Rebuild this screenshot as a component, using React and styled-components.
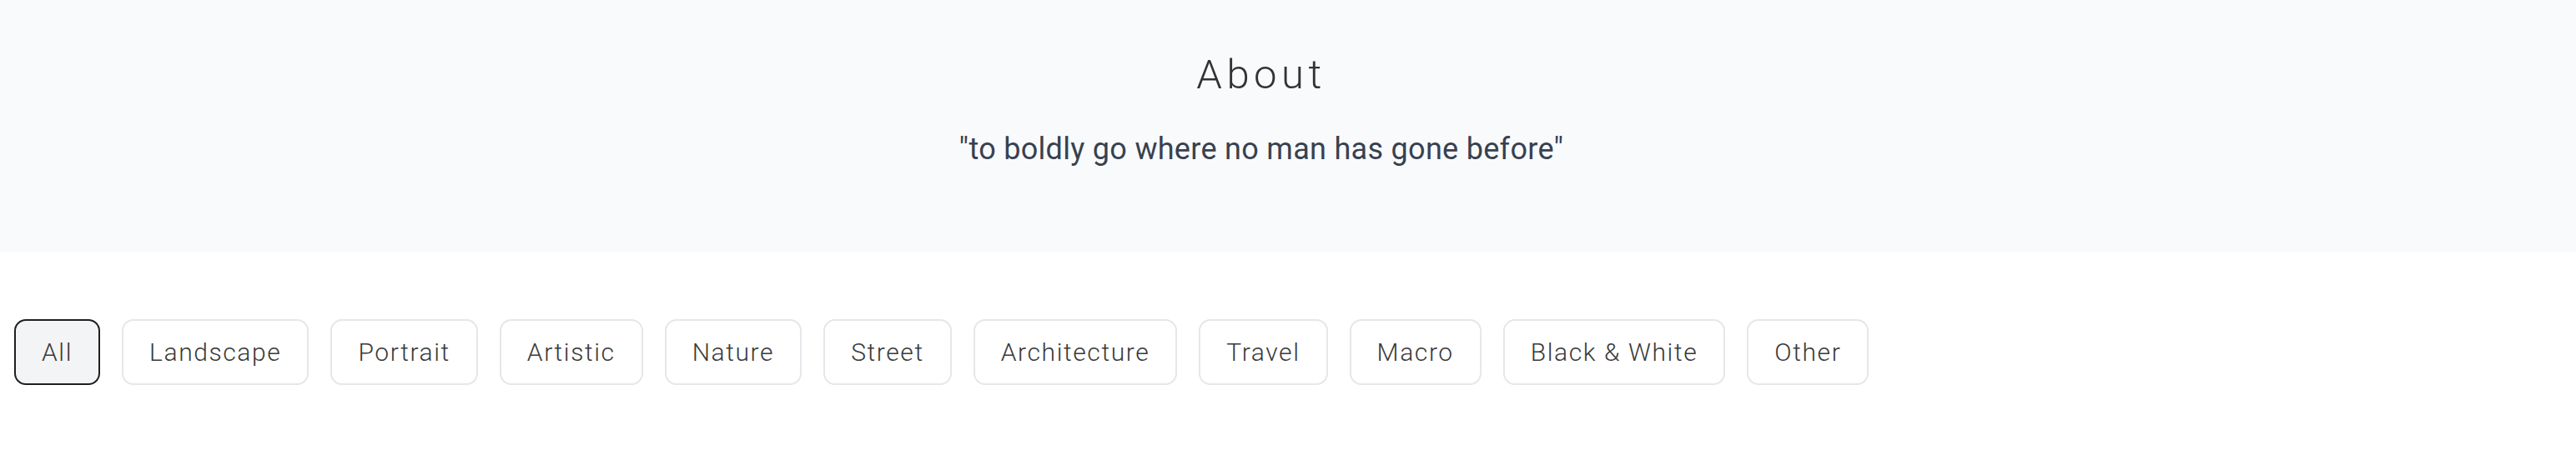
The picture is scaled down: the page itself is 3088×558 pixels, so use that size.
import React, { useState } from "react";
import styled, { createGlobalStyle } from "styled-components";

const GlobalStyle = createGlobalStyle`
  html, body {
    margin: 0;
    padding: 0;
    background: #ffffff;
  }
  body {
    font-family: Roboto, "Noto Sans", sans-serif;
  }
`;

const categories = [
  "All",
  "Landscape",
  "Portrait",
  "Artistic",
  "Nature",
  "Street",
  "Architecture",
  "Travel",
  "Macro",
  "Black & White",
  "Other",
];

const Hero = styled.section`
  background: #f9fafb;
  padding: 58px 80px 96px 16px;
  text-align: center;
`;

const Title = styled.h1`
  margin: 0;
  font-size: 49px;
  line-height: 64px;
  font-weight: 300;
  color: #333333;
  letter-spacing: 5.5px;
`;

const Quote = styled.p`
  margin: 29px 0 0;
  font-size: 36px;
  line-height: 56px;
  font-weight: 400;
  color: #374151;
  letter-spacing: 0.3px;
`;

const FilterBar = styled.nav`
  display: flex;
  flex-wrap: wrap;
  gap: 26px;
  padding: 80px 17px;
`;

const FilterButton = styled.button`
  height: 79px;
  padding: 0 31px;
  border: 2px solid ${(p) => (p.$active ? "#1f1f1f" : "#e5e7eb")};
  border-radius: 14px;
  background: ${(p) => (p.$active ? "#f3f4f6" : "#ffffff")};
  color: #3a3a3a;
  font-family: Roboto, "Noto Sans", sans-serif;
  font-size: 30px;
  font-weight: 300;
  letter-spacing: 1.6px;
  cursor: pointer;
`;

export default function App() {
  const [active, setActive] = useState("All");
  return (
    <>
      <GlobalStyle />
      <Hero>
        <Title>About</Title>
        <Quote>"to boldly go where no man has gone before"</Quote>
      </Hero>
      <FilterBar>
        {categories.map((c) => (
          <FilterButton
            key={c}
            $active={active === c}
            onClick={() => setActive(c)}
          >
            {c}
          </FilterButton>
        ))}
      </FilterBar>
    </>
  );
}
